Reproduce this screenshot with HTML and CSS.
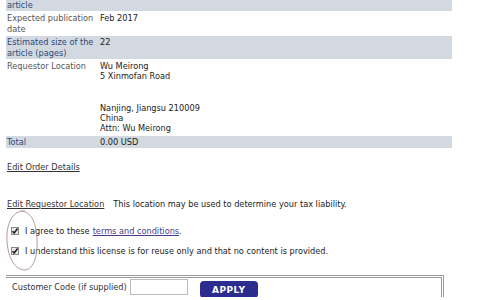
FILE: index.html
```html
<!DOCTYPE html>
<html lang="en">
<head>
    <meta charset="UTF-8">
    <title>Order Review</title>
    <link rel="stylesheet" href="styles.css">
</head>
<body>
    <div class="page">
        <table class="details">
            <tr class="shaded first">
                <td class="label">article</td>
                <td class="value"></td>
            </tr>
            <tr>
                <td class="label">Expected publication date</td>
                <td class="value">Feb 2017</td>
            </tr>
            <tr class="shaded">
                <td class="label">Estimated size of the article (pages)</td>
                <td class="value">22</td>
            </tr>
            <tr>
                <td class="label">Requestor Location</td>
                <td class="value">Wu Meirong<br>5 Xinmofan Road<br><br><br>Nanjing, Jiangsu 210009<br>China<br>Attn: Wu Meirong</td>
            </tr>
            <tr class="shaded">
                <td class="label">Total</td>
                <td class="value">0.00 USD</td>
            </tr>
        </table>

        <p class="edit-link"><a href="#">Edit Order Details</a></p>

        <p class="edit-link location"><a href="#">Edit Requestor Location</a><span class="note">This location may be used to determine your tax liability.</span></p>

        <div class="agreements">
            <label class="agree"><span class="box"><svg viewBox="0 0 8 8" width="8" height="8"><path d="M1.5 4.2 L3.2 6 L6.6 1.6" fill="none" stroke="#222" stroke-width="1.6"/></svg></span>I agree to these <a href="#" class="terms">terms and conditions</a>.</label>
            <label class="agree"><span class="box"><svg viewBox="0 0 8 8" width="8" height="8"><path d="M1.5 4.2 L3.2 6 L6.6 1.6" fill="none" stroke="#222" stroke-width="1.6"/></svg></span>I understand this license is for reuse only and that no content is provided.</label>
            <svg class="circle-mark" width="36" height="62" viewBox="0 0 36 62">
                <path d="M21 1 C9 0 2 13 3 31 C4 48 11 60 21 60 C30 59 34 45 33 29 C32 13 28 2 17 1" fill="none" stroke="#b69a9a" stroke-width="1"/>
            </svg>
        </div>

        <div class="code-box">
            <label for="customer-code">Customer Code (if supplied)</label>
            <input type="text" id="customer-code">
            <button type="button">APPLY</button>
        </div>
    </div>
</body>
</html>
```

FILE: styles.css
```css
* {
    box-sizing: border-box;
    margin: 0;
    padding: 0;
}

body {
    font-family: 'DejaVu Sans', Verdana, sans-serif;
    font-size: 8.2px;
    line-height: 10.4px;
    color: #222;
    background: #fff;
    overflow: hidden;
}

.page {
    padding: 0 0 0 6px;
}

.details {
    width: 446px;
    border-collapse: separate;
    border-spacing: 0 1px;
    margin-top: -1px;
}

.details td {
    vertical-align: top;
    padding: 1px 2px 1px 1px;
}

.details .first td {
    padding: 0 2px 1px 1px;
}

.details .label {
    width: 93px;
    color: #555;
}

.details .value {
    color: #222;
}

.details .shaded td {
    background: #d2d9e0;
}

.details .shaded .label {
    color: #2c4a78;
}

.edit-link {
    margin-top: 13px;
    padding-left: 1px;
}

.edit-link a {
    color: #333;
    text-decoration: underline;
}

.edit-link.location {
    margin-top: 26px;
}

.note {
    margin-left: 9px;
}

.agreements {
    position: relative;
    padding: 17px 0 0 5px;
}

.agree {
    display: flex;
    align-items: center;
    height: 10px;
    margin-bottom: 10px;
}

.box {
    display: inline-block;
    width: 8px;
    height: 8px;
    border: 1px solid #8a8a8a;
    background: #e8e8e8;
    margin-right: 6px;
    line-height: 0;
}

.box svg {
    margin: -1px 0 0 -1px;
}

.terms {
    color: #4a3c8c;
    text-decoration: underline;
    margin: 0 0 0 3px;
}

.circle-mark {
    position: absolute;
    left: -2px;
    top: 1px;
}

.code-box {
    margin-top: 19px;
    width: 438px;
    height: 22px;
    border-top: 3px double #9a9a9a;
    border-right: 3px double #9a9a9a;
    display: flex;
    align-items: flex-start;
    padding: 1px 0 0 6px;
    gap: 3px;
}

.code-box label {
    color: #333;
    line-height: 16px;
}

.code-box input {
    width: 58px;
    height: 16px;
    border: 1px solid #bbb;
    background: #fff;
}

.code-box button {
    margin: 2px 0 0 9px;
    width: 58px;
    height: 17px;
    background: #2b2c8e;
    color: #fff;
    border: none;
    border-radius: 4px;
    font-family: 'DejaVu Sans', Verdana, sans-serif;
    font-weight: bold;
    font-size: 9px;
    letter-spacing: 0.5px;
}
```
